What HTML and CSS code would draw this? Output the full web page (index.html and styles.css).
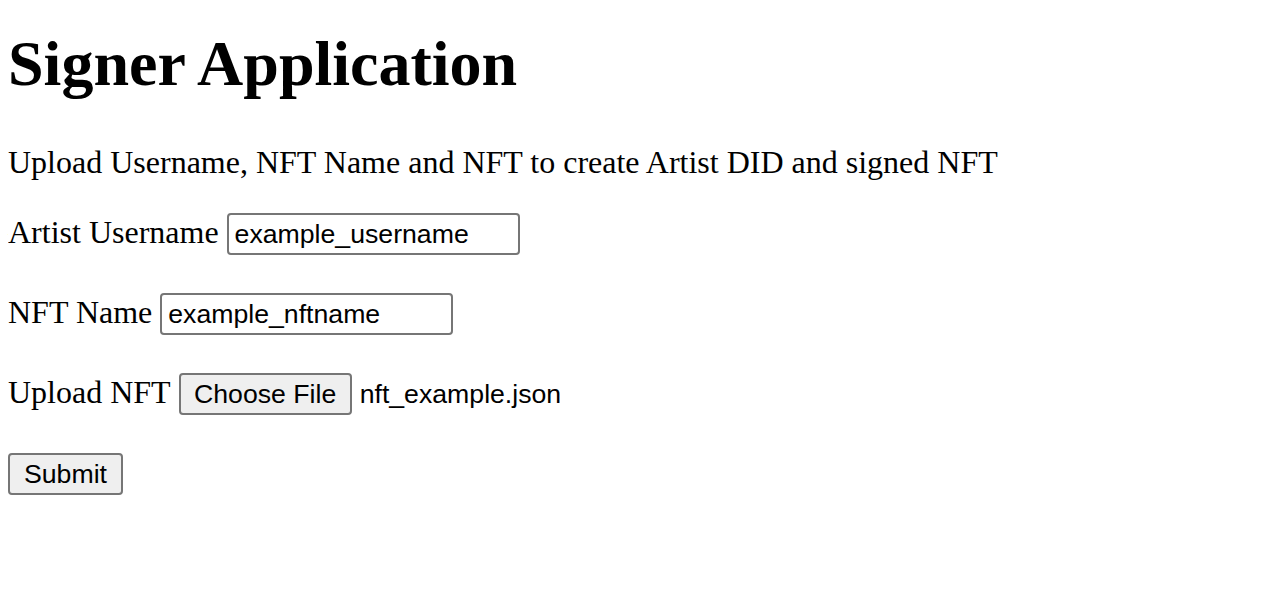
FILE: index.html
```html
<!DOCTYPE html>
<html lang="en">
<head>
<meta charset="utf-8">
<title>Signer Application</title>
<link rel="stylesheet" href="styles.css">
</head>
<body>
<h1 class="title">Signer Application</h1>
<p class="intro">Upload Username, NFT Name and NFT to create Artist DID and signed NFT</p>
<form class="form">
  <div class="row">
    <label class="label" for="username">Artist Username</label>
    <input class="field" id="username" type="text" value="example_username">
  </div>
  <div class="row">
    <label class="label" for="nftname">NFT Name</label>
    <input class="field" id="nftname" type="text" value="example_nftname">
  </div>
  <div class="row">
    <span class="label">Upload NFT</span>
    <button class="btn file-btn" type="button">Choose File</button>
    <span class="filename">nft_example.json</span>
  </div>
  <div class="row">
    <button class="btn submit-btn" type="submit">Submit</button>
  </div>
</form>
</body>
</html>
```
FILE: styles.css
```css
html, body {
  background: #ffffff;
}
body {
  margin: 8px;
  font-family: "Liberation Serif", "Times New Roman", serif;
  font-size: 32px;
  color: #000;
}
.title {
  font-size: 64px;
  font-weight: bold;
  margin: 19px 0 43px;
  line-height: normal;
}
.intro {
  margin: 0 0 32px;
  line-height: normal;
}
.form {
  display: flex;
  flex-direction: column;
  gap: 38px;
}
.row {
  display: flex;
  align-items: baseline;
  gap: 8px;
}
.label {
  font-family: "Liberation Serif", "Times New Roman", serif;
  font-size: 32px;
}
.field {
  box-sizing: border-box;
  width: 293px;
  height: 42px;
  border: 2px solid #767676;
  border-radius: 4px;
  padding: 0 4px 0 6px;
  font-family: "Liberation Sans", Arial, sans-serif;
  font-size: 26.67px;
  color: #000;
  background: #fff;
  outline: none;
}
.btn {
  box-sizing: border-box;
  height: 42px;
  border: 2px solid #767676;
  border-radius: 4px;
  background: #efefef;
  font-family: "Liberation Sans", Arial, sans-serif;
  font-size: 26.67px;
  color: #000;
  padding: 0 12px;
}
.file-btn {
  width: 173px;
}
.submit-btn {
  width: 115px;
}
.filename {
  font-family: "Liberation Sans", Arial, sans-serif;
  font-size: 26.67px;
}
```
